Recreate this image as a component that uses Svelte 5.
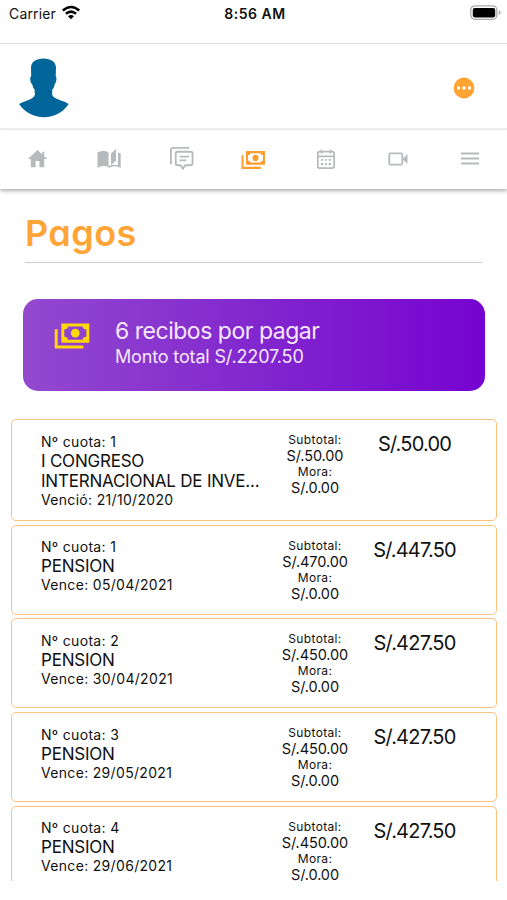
<script>
  const payments = [
    { n: 1, name: 'I CONGRESO INTERNACIONAL DE INVE...', due: 'Venció: 21/10/2020', sub: '50.00', total: '50.00' },
    { n: 1, name: 'PENSION', due: 'Vence: 05/04/2021', sub: '470.00', total: '447.50' },
    { n: 2, name: 'PENSION', due: 'Vence: 30/04/2021', sub: '450.00', total: '427.50' },
    { n: 3, name: 'PENSION', due: 'Vence: 29/05/2021', sub: '450.00', total: '427.50' },
    { n: 4, name: 'PENSION', due: 'Vence: 29/06/2021', sub: '450.00', total: '427.50' }
  ];
</script>

{#snippet cash()}
  <path d="M5 2v13h19V2z M9.500 4h10q0 1.800 2.500 2v5q-2.500.2-2.500 2h-10q0-1.800-2.500-2V6q2.500-.2 2.500-2z" fill-rule="evenodd" />
  <circle cx="14.500" cy="8.500" r="3" />
  <path d="M.5 6h2v11h17.500v2H.5z" />
{/snippet}

<div class="screen">
  <div class="status">
    <div class="carrier">
      <span>Carrier</span>
      <svg width="20" height="16" viewBox="0 0 20 16" fill="none" stroke="#000" stroke-width="2.6">
        <path d="M1.8 5.5Q10-1.5 18.2 5.5M4.9 8.8Q10 4.5 15.1 8.8" />
        <path d="M7 11.2Q10 8.8 13 11.2L10 14.2z" fill="#000" stroke="none" />
      </svg>
    </div>
    <strong>8:56 AM</strong>
    <svg class="battery" width="31" height="16" viewBox="0 0 31 16">
      <rect x=".8" y=".9" width="26" height="13.4" rx="4" fill="#fff" stroke="#aaa" stroke-width="1.3" />
      <rect x="2.8" y="2.9" width="22.4" height="9.6" rx="2" />
      <path d="M28.7 5.3q2 .7 2 2.3t-2 2.3z" fill="#aaa" />
    </svg>
  </div>

  <header>
    <svg width="50" height="60" viewBox="0 0 50 60" fill="#006699">
      <path d="M12 10C12 4 17 .6 24.500 .6S37 4 37 10L36.700 18c1.400 1.500.8 6-1.200 9-.4 2.500-1 3.500-2.300 4.500.3 1.500.2 3-.2 4.300.4 2.300 1.500 3.500 3.300 4.300C40 42.200 45 43.200 49.700 46 44 54.500 35 59.200 25 59.200S6 54.500 0 46c5-2.800 9.500-3.500 13-5.800 1.800-1 2.900-2.200 3-4.400-.5-1.300-.6-2.800-.3-4.300-1.200-1-1.800-2-2.200-4.500-2.500-3-3-7.500-1.300-9z" />
    </svg>
    <svg width="22" height="22" viewBox="0 0 22 22">
      <circle cx="11" cy="11" r="10.400" fill="#ffa433" />
      <g fill="#fff"><circle cx="5.500" cy="11" r="1.700" /><circle cx="11" cy="11" r="1.700" /><circle cx="16.500" cy="11" r="1.700" /></g>
    </svg>
  </header>

  <nav>
    <div><svg width="23" height="23" viewBox="0 0 24 24" fill="#b6babc"><path d="M12 3 2 12.500h3V21h5v-6.500h4V21h5v-8.500h3L19 9.600V5h-2v2.700z" /></svg></div>
    <div><svg width="24" height="24" viewBox="0 0 24 24" fill="#b6babc"><path d="M.5 5.500C4 3.300 8.500 3.500 11.500 5.300V20C8 18.600 4.500 18.800.5 21zM19 2v11.800l-5 4.200V6.500zM21 5.300l2.700 1.200V21c-4-2.200-7.500-2.300-12.200 0v-2c4-1.500 6.500-1.700 9.500-.8z" /></svg></div>
    <div><svg width="25" height="25" viewBox="0 0 26 26" fill="none" stroke="#b6babc" stroke-width="1.900"><path d="M2 19V4a2 2 0 0 1 2-2h17M9 6h13.500a2 2 0 0 1 2 2v10a2 2 0 0 1-2 2H17l-2.500 3.500L12 20H9a2 2 0 0 1-2-2V8a2 2 0 0 1 2-2zM11 11h10M11 15h7" /></svg></div>
    <div><svg class="shift" width="24" height="22" viewBox="0 0 24 21" preserveAspectRatio="none" fill="#ff9d30">{@render cash()}</svg></div>
    <div><svg width="20" height="22" viewBox="0 0 22 24" fill="none" stroke="#b6babc" stroke-width="1.900"><rect x="2" y="4" width="18" height="18" rx="2" /><path d="M2 9h18M6 1.500V6M16 1.500V6" /><path d="M5.500 13h2.500m2 0h2m2 0h2.500M5.500 17.500h2.500m2 0h2m2 0h2.500" stroke-width="2" /></svg></div>
    <div><svg width="22" height="20" viewBox="0 0 22 20" fill="none" stroke="#b6babc" stroke-width="1.800"><rect x="2.300" y="4.400" width="13" height="11.200" rx="1" /><path d="M16 9.500 20.500 5v10L16 10.500z" fill="#b6babc" stroke="none" /></svg></div>
    <div><svg width="20" height="20" viewBox="0 0 20 20" stroke="#b6babc" stroke-width="1.800"><path d="M1 4.500h18M1 9.500h18M1 14.500h18" /></svg></div>
  </nav>

  <main>
    <h1>Pagos</h1>
    <section class="summary">
      <svg width="36" height="28" viewBox="0 1 24.500 19" preserveAspectRatio="none" fill="#ffd60a">{@render cash()}</svg>
      <div>
        <p class="count">6 recibos por pagar</p>
        <p class="amount">Monto total S/.2207.50</p>
      </div>
    </section>
    <section class="list">
      {#each payments as p}
        <article class:tall={p.name.length > 20}>
          <div class="info">
            <p class="small">Nº cuota: {p.n}</p>
            <p class="name">{p.name}</p>
            <p class="small due">{p.due}</p>
          </div>
          <div class="breakdown">
            <p class="label">Subtotal:</p>
            <p>S/.{p.sub}</p>
            <p class="label">Mora:</p>
            <p>S/.0.00</p>
          </div>
          <p class="total">S/.{p.total}</p>
        </article>
      {/each}
    </section>
  </main>
</div>

<style>
  :global(body) { margin: 0; background: #fff; }
  .screen { width: 507px; height: 900px; overflow: hidden; background: #fff; color: #111; font-family: Inter, "Liberation Sans", sans-serif; display: flex; flex-direction: column; }
  p, h1 { margin: 0; white-space: nowrap; }
  svg { display: block; flex: none; }
  .status { box-sizing: border-box; height: 44px; flex: none; border-bottom: 1px solid #dedede; display: grid; grid-template-columns: 1fr auto 1fr; align-items: start; padding: 5px 6px 0 9px; font-size: 14px; line-height: 18px; }
  .status strong { font-weight: 600; letter-spacing: .500px; }
  .carrier { display: flex; gap: 5px; letter-spacing: .15px; }
  .battery { justify-self: end; }
  header { box-sizing: border-box; height: 86px; flex: none; border-bottom: 2px solid #f0f0f0; display: flex; justify-content: space-between; align-items: center; padding: 4px 32px 0 19px; }
  nav { box-sizing: border-box; height: 59px; flex: none; display: flex; box-shadow: 0 2px 4px rgba(0, 0, 0, .32); padding: 0 1px 2px; }
  nav div { flex: 1; display: flex; align-items: center; justify-content: center; }
  .shift { margin-top: 2px; }
  main { height: 692px; flex: none; overflow: hidden; }
  h1 { box-sizing: border-box; margin: 22px 25px 0; height: 52px; border-bottom: 1px solid #ccc; color: #ffa436; font-size: 36px; line-height: 45px; font-weight: 600; letter-spacing: .4px; font-feature-settings: "cv11"; }
  .summary { box-sizing: border-box; margin: 36px 22px 0 23px; height: 92px; border-radius: 15px; background: linear-gradient(90deg, #9249cf, #8227ce 50%, #7603d0); color: #f6e7ff; display: flex; padding: 19px 0 0 31px; gap: 25px; }
  .summary svg { margin-top: 4px; }
  .count { font-size: 23px; line-height: 27px; letter-spacing: -.480px; }
  .amount { font-size: 18px; line-height: 23px; letter-spacing: -.150px; }
  .list { margin: 28px 10px 0 11px; display: flex; flex-direction: column; gap: 3.700px; }
  article { box-sizing: border-box; height: 90px; border: 1px solid #fbc27d; border-radius: 5px; display: flex; align-items: flex-start; padding: 12px 0 0 29px; }
  article.tall { height: 102px; }
  .info { width: 222px; margin-top: -.5px; }
  .small { font-size: 14px; line-height: 19px; letter-spacing: .320px; }
  .due { line-height: 18px; }
  .name { font-size: 17px; line-height: 20px; letter-spacing: -.220px; white-space: normal; }
  .breakdown { width: 104px; text-align: center; font-size: 14.500px; line-height: 17px; letter-spacing: -.1px; }
  .label { font-size: 12px; line-height: 15px; letter-spacing: .350px; }
  .total { width: 95px; text-align: center; font-size: 20px; line-height: 25px; letter-spacing: -.800px; }
</style>
